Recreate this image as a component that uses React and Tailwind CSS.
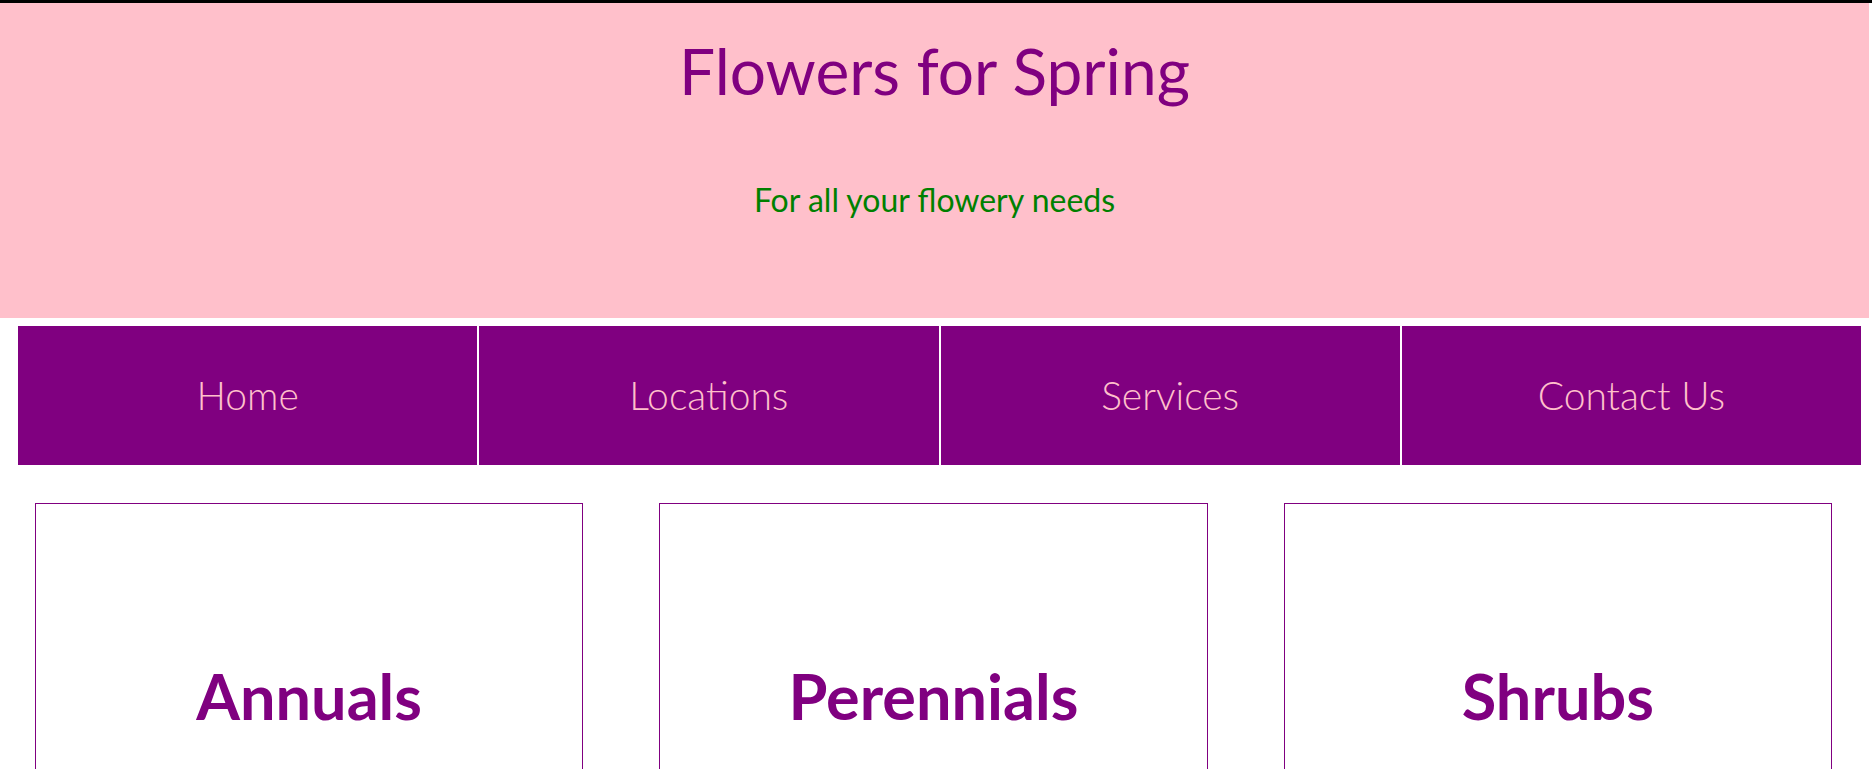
const links = ["Home", "Locations", "Services", "Contact Us"];
const cards = ["Annuals", "Perennials", "Shrubs"];

export default function App() {
  return (
    <div className="min-h-screen bg-white border-t-[3px] border-black font-['Lato','Open_Sans',sans-serif]">
      <header className="mr-[3px] h-[315px] bg-[#ffc0cb] flex flex-col items-center">
        <h1 className="mt-[36px] text-[64px] leading-none font-normal text-[#800080]">
          Flowers for Spring
        </h1>
        <p className="mt-[81px] text-[32px] leading-none text-[#008000]">
          For all your flowery needs
        </p>
      </header>

      <nav className="mt-[8px] ml-[18px] mr-[11px] flex gap-[2px]">
        {links.map((link) => (
          <a
            key={link}
            href="#"
            className="flex-1 h-[139px] bg-[#800080] flex items-center justify-center text-[39px] font-light text-[#ffc0cb]"
          >
            {link}
          </a>
        ))}
      </nav>

      <main className="mt-[38px] pl-[35px] pr-[40px] grid grid-cols-3 gap-x-[76px]">
        {cards.map((card) => (
          <section
            key={card}
            className="h-[386px] border border-[#800080] flex items-center justify-center"
          >
            <h2 className="text-[63px] font-bold text-[#800080]">{card}</h2>
          </section>
        ))}
      </main>
    </div>
  );
}
